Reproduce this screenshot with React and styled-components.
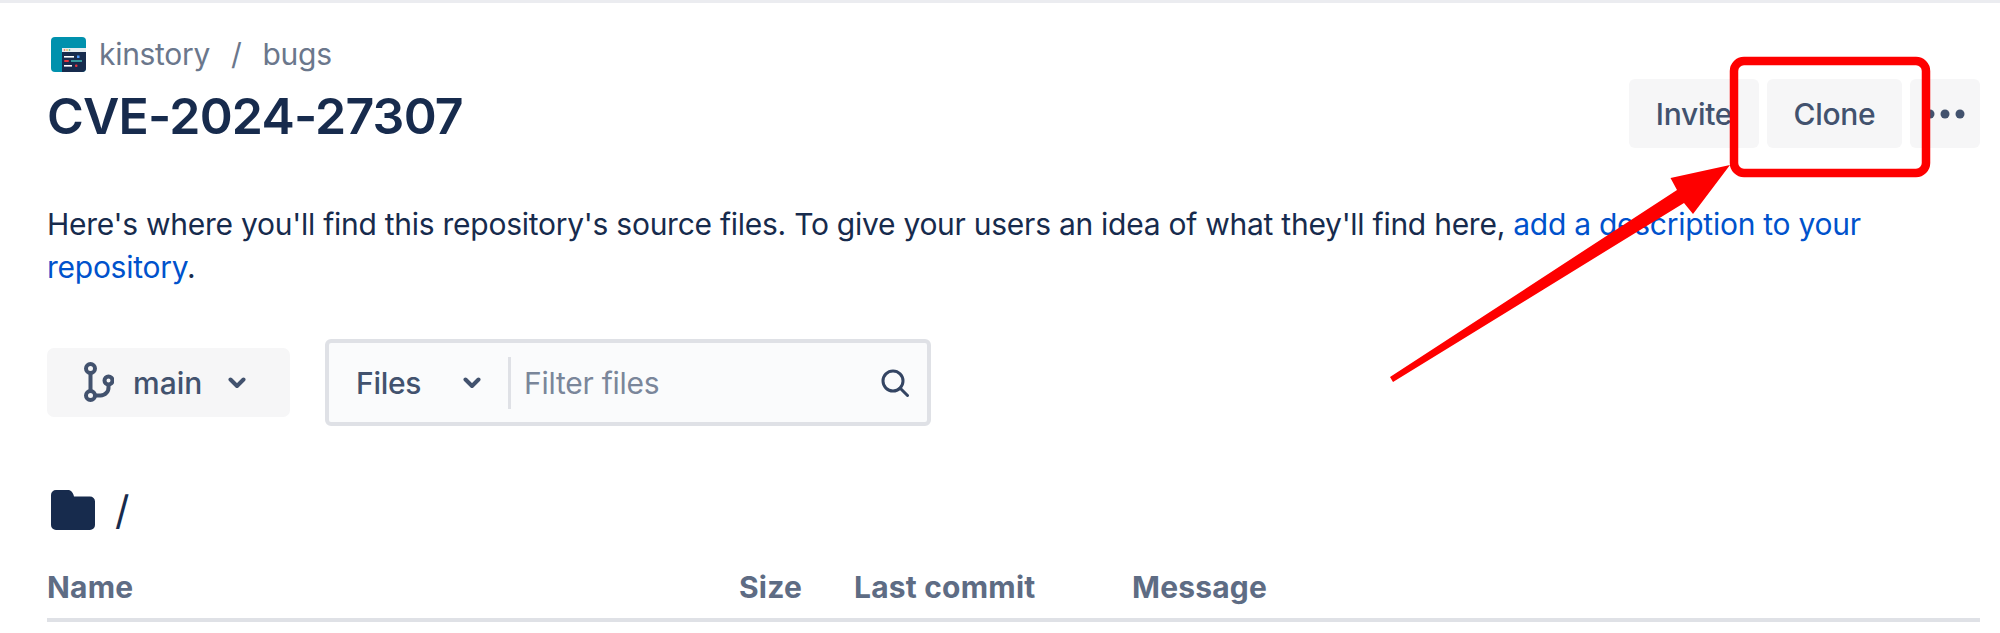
import React from "react";
import styled, { createGlobalStyle } from "styled-components";

const Global = createGlobalStyle`
  html, body { margin: 0; padding: 0; background: #fff; }
  body { font-family: Inter, "Noto Sans", "Liberation Sans", sans-serif; color: #172b4d; }
`;

const Page = styled.div`
  position: relative;
  width: 2000px;
  height: 633px;
  overflow: hidden;
  box-sizing: border-box;
  border-top: 3px solid #ebecf0;
  padding: 33px 20px 0 47px;
`;

const HeaderRow = styled.header`
  display: flex;
  justify-content: space-between;
  align-items: flex-start;
`;

const TitleBlock = styled.div`
  display: flex;
  flex-direction: column;
`;

const Crumbs = styled.nav`
  display: flex;
  align-items: center;
  height: 36px;
  padding-left: 4px;
  font-size: 30px;
  color: #6b778c;
  letter-spacing: -0.3px;
`;

const CrumbText = styled.span`
  margin-left: ${(p) => p.$gap}px;
`;

const Title = styled.h1`
  margin: 14px 0 0;
  font-size: 50px;
  line-height: 60px;
  font-weight: 600;
  letter-spacing: -0.8px;
  color: #172b4d;
`;

const Actions = styled.div`
  display: flex;
  gap: 8px;
  margin-top: 43px;
`;

const ActionButton = styled.button`
  width: ${(p) => p.$w}px;
  height: 69px;
  border: 0;
  padding: 0;
  border-radius: 6px;
  background: #f6f6f7;
  color: #42526e;
  font: 500 30px Inter, sans-serif;
  letter-spacing: -0.3px;
  display: flex;
  align-items: center;
  justify-content: center;
`;

const Description = styled.p`
  margin: 55px 0 0;
  width: 1840px;
  font-size: 30px;
  line-height: 43px;
  letter-spacing: -0.26px;
  color: #172b4d;
`;

const Link = styled.a`
  color: #0052cc;
`;

const Toolbar = styled.div`
  display: flex;
  align-items: center;
  gap: 35px;
  margin-top: 50px;
`;

const BranchButton = styled.button`
  width: 243px;
  height: 69px;
  border: 0;
  padding: 0 0 0 37px;
  box-sizing: border-box;
  border-radius: 7px;
  background: #f6f6f7;
  color: #42526e;
  font: 500 30px Inter, sans-serif;
  letter-spacing: 0;
  display: flex;
  align-items: center;
  gap: 19px;
`;

const BranchLabel = styled.span`
  margin-right: 7px;
`;

const FilterBox = styled.div`
  width: 606px;
  height: 87px;
  box-sizing: border-box;
  border: 4px solid #dfe1e6;
  border-radius: 6px;
  background: #fafbfc;
  display: flex;
  align-items: center;
`;

const FilterScope = styled.div`
  width: 182px;
  box-sizing: border-box;
  height: 52px;
  padding: 0 27px 0 27px;
  display: flex;
  align-items: center;
  justify-content: space-between;
  border-right: 3px solid #dfe1e6;
  color: #42526e;
  font-size: 30px;
  font-weight: 500;
  letter-spacing: -0.3px;
`;

const FilterInput = styled.div`
  flex: 1;
  padding: 0 18px 0 13px;
  display: flex;
  align-items: center;
  justify-content: space-between;
  color: #7a869a;
  font-size: 30px;
  letter-spacing: -0.25px;
`;

const PathRow = styled.div`
  display: flex;
  align-items: center;
  gap: 20px;
  margin: 63px 0 0 4px;
  height: 42px;
  font-size: 40px;
  font-weight: 400;
  color: #172b4d;
`;

const TableHead = styled.div`
  display: grid;
  grid-template-columns: 692px 115px 278px 1fr;
  margin-top: 38px;
  padding-bottom: 13px;
  border-bottom: 4px solid #dfe1e6;
  font-size: 30px;
  line-height: 36px;
  font-weight: 700;
  color: #5e6c84;
  letter-spacing: 0.2px;
`;

const Annotation = styled.svg`
  position: absolute;
  left: 0;
  top: -3px;
  pointer-events: none;
`;

const Logo = () => (
  <svg width="35" height="35" viewBox="0 0 35 35">
    <rect width="35" height="35" rx="4" fill="#0091ad" />
    <path d="M11 11H35V31a4 4 0 0 1-4 4H11Z" fill="#172b4d" />
    <rect x="11" y="11" width="24" height="4" fill="#e6ecf0" />
    <circle cx="13.5" cy="13" r=".8" fill="#ff5630" />
    <circle cx="16" cy="13" r=".8" fill="#ffab00" />
    <circle cx="18.5" cy="13" r=".8" fill="#36b37e" />
    <rect x="13" y="19" width="10" height="1.6" fill="#fff" />
    <rect x="26" y="18.5" width="2.5" height="2.5" fill="#4c9aff" />
    <rect x="13" y="23" width="5" height="2" rx="1" fill="#e5353d" />
    <rect x="20" y="23.2" width="11" height="1.6" fill="#3fb6b2" />
    <rect x="13" y="28" width="8" height="1.6" fill="#fff" />
    <rect x="24" y="27.5" width="2.5" height="2.5" rx="1" fill="#e5353d" />
  </svg>
);

const Chevron = () => (
  <svg width="18" height="12" viewBox="0 0 18 12" fill="none">
    <path d="M2.5 2.5 9 9l6.5-6.5" stroke="#42526e" strokeWidth="4" strokeLinecap="round" strokeLinejoin="round" />
  </svg>
);

const BranchIcon = () => (
  <svg width="30" height="41" viewBox="0 0 30 41" fill="none" stroke="#42526e" strokeWidth="4">
    <circle cx="6.500" cy="6.500" r="4.500" />
    <circle cx="6.500" cy="33.500" r="4.500" />
    <circle cx="24.500" cy="18.500" r="4" />
    <path d="M6.500 11V29M24.500 22.500v2.500a8 8 0 0 1-8 8.500H11" />
  </svg>
);

const SearchIcon = () => (
  <svg width="28" height="28" viewBox="0 0 28 28" fill="none" stroke="#344563" strokeWidth="3">
    <circle cx="12" cy="12" r="10" />
    <path d="M19 19l7.500 7.500" strokeLinecap="round" />
  </svg>
);

const FolderIcon = () => (
  <svg width="44" height="40" viewBox="0 0 44 40" fill="#172b4d">
    <path d="M5 0h12c3 0 5 2.500 6 6.500H39a5 5 0 0 1 5 5V35a5 5 0 0 1-5 5H5a5 5 0 0 1-5-5V5a5 5 0 0 1 5-5Z" />
  </svg>
);

export default function App() {
  return (
    <>
      <Global />
      <Page>
        <HeaderRow>
          <TitleBlock>
            <Crumbs>
              <Logo />
              <CrumbText $gap={13}>kinstory</CrumbText>
              <CrumbText $gap={21}>/</CrumbText>
              <CrumbText $gap={21}>bugs</CrumbText>
            </Crumbs>
            <Title>CVE-2024-27307</Title>
          </TitleBlock>
          <Actions>
            <ActionButton $w={130}>Invite</ActionButton>
            <ActionButton $w={135}>Clone</ActionButton>
            <ActionButton $w={70}>
              <svg width="40" height="10" viewBox="0 0 40 10" fill="#42526e">
                <circle cx="5" cy="5" r="4.500" />
                <circle cx="20" cy="5" r="4.500" />
                <circle cx="35" cy="5" r="4.500" />
              </svg>
            </ActionButton>
          </Actions>
        </HeaderRow>
        <Description>
          Here's where you'll find this repository's source files. To give your users an idea of what they'll find here,{" "}
          <Link>add a description to your repository</Link>.
        </Description>
        <Toolbar>
          <BranchButton>
            <BranchIcon />
            <BranchLabel>main</BranchLabel>
            <Chevron />
          </BranchButton>
          <FilterBox>
            <FilterScope>
              <span>Files</span>
              <Chevron />
            </FilterScope>
            <FilterInput>
              <span>Filter files</span>
              <SearchIcon />
            </FilterInput>
          </FilterBox>
        </Toolbar>
        <PathRow>
          <FolderIcon />
          <span>/</span>
        </PathRow>
        <TableHead>
          <span>Name</span>
          <span>Size</span>
          <span>Last commit</span>
          <span>Message</span>
        </TableHead>
        <Annotation width="2000" height="633" viewBox="0 0 2000 633">
          <rect x="1734" y="61" width="192" height="112" rx="10" fill="none" stroke="#fe0000" strokeWidth="8.500" />
          <path d="M1730 165 1670.500 178 1677 190 1390 377 1393 382 1684 203 1693 214Z" fill="#fe0000" />
        </Annotation>
      </Page>
    </>
  );
}
